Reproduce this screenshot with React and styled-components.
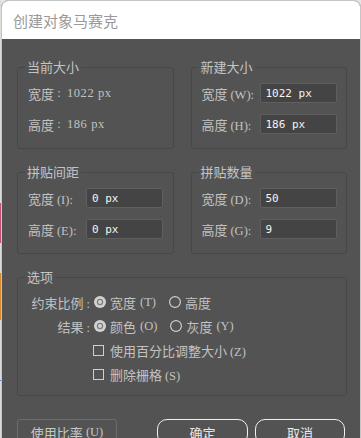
import React from 'react';
import styled, { createGlobalStyle } from 'styled-components';

const GlobalStyle = createGlobalStyle`
  html, body {
    margin: 0;
    padding: 0;
    background: #e6e6e6;
  }
  body {
    font-family: "Noto Sans CJK SC", "Noto Sans", sans-serif;
  }
`;

const Page = styled.div`
  display: flex;
  width: 361px;
  height: 438px;
  overflow: hidden;
`;

// the window behind the dialog peeks out on the left edge
const Strip = styled.div`
  flex: none;
  width: 1px;
  background: linear-gradient(
    to bottom,
    #dcdcdc 0 203px,
    #4a78d0 203px 204px,
    #c24f7c 204px 243px,
    #dcdcdc 243px 273px,
    #d98a2f 273px 320px,
    #dcdcdc 320px 380px,
    #4a78d0 380px 381px,
    #dcdcdc 381px
  );
`;

const Dialog = styled.div`
  flex: 1;
  display: flex;
  flex-direction: column;
  border: 1px solid #c6c6c6;
  border-bottom: none;
  border-radius: 7px 7px 0 0;
  overflow: hidden;
  background: #535353;
`;

const TitleBar = styled.div`
  height: 38px;
  flex: none;
  display: flex;
  align-items: center;
  padding-left: 11px;
  background: #fff;
  color: #9a9a9a;
  font-size: 15px;
`;

const Body = styled.div`
  flex: 1;
  display: flex;
  flex-direction: column;
  gap: 15px;
  padding: 20px 13px 0 15px;
`;

const Pair = styled.div`
  display: grid;
  grid-template-columns: 1fr 1fr;
  column-gap: 17px;
`;

const Group = styled.fieldset`
  margin: 0;
  min-width: 0;
  border: 1px solid #474747;
  border-radius: 3px;
  padding: ${(p) => p.$pad || '8px 9px 14px 10px'};
  display: flex;
  flex-direction: column;
  gap: ${(p) => p.$gap || '11px'};
`;

const Legend = styled.legend`
  padding: 0 2px;
  margin-left: -3px;
  font-size: 13px;
  line-height: 16px;
  color: #c4c4c4;
`;

const Row = styled.div`
  display: flex;
  align-items: center;
  height: 20px;
  font-size: 13px;
  color: #c2c2c2;
  white-space: nowrap;
`;

const Latin = styled.span`
  font-family: "Liberation Serif", serif;
  font-size: 12.5px;
  letter-spacing: ${(p) => p.$track || 0}px;
`;

const Label = styled.span`
  flex: none;
  width: 58px;
  white-space: nowrap;
`;

const Field = styled.div`
  flex: none;
  box-sizing: border-box;
  width: 77px;
  height: 20px;
  padding: 0 5px;
  display: flex;
  align-items: center;
  background: #444;
  border: 1px solid #5f5f5f;
  border-radius: 2px;
  color: #f4f4f4;
  font-family: "DejaVu Sans Mono", monospace;
  font-size: 11px;
`;

const OptLabel = styled.span`
  flex: none;
  width: 62px;
  margin-right: 4px;
  text-align: right;
`;

const Choice = styled.span`
  display: inline-flex;
  align-items: center;
  gap: 4px;
  margin-right: 13px;
`;

const CheckRow = styled(Row)`
  padding-left: 65px;
  gap: 6px;
`;

const Box = styled.span`
  flex: none;
  box-sizing: border-box;
  width: 11px;
  height: 11px;
  border: 1px solid #cfcfcf;
`;

const Footer = styled.div`
  display: flex;
  align-items: flex-start;
  margin-top: 8px;
`;

const Button = styled.div`
  box-sizing: border-box;
  height: 26px;
  width: ${(p) => p.$w}px;
  margin-left: ${(p) => p.$ml || 0}px;
  display: flex;
  align-items: center;
  justify-content: center;
  font-size: 13px;
  color: ${(p) => (p.$round ? '#e8e8e8' : '#c8c8c8')};
  border: ${(p) => (p.$round ? '1.5px solid #f0f0f0' : '1px solid #6c6c6c')};
  border-radius: ${(p) => (p.$round ? '10px' : '3px')};
`;

const Radio = ({ on }) => (
  <svg width="12" height="12" viewBox="0 0 12 12">
    {on ? (
      <>
        <circle cx="6" cy="6" r="6" fill="#d2d2d2" />
        <circle cx="6" cy="6" r="3.2" fill="#7c7c7c" />
        <circle cx="6" cy="6" r="1.9" fill="#d6d6d6" />
      </>
    ) : (
      <circle cx="6" cy="6" r="5.4" fill="none" stroke="#cfcfcf" strokeWidth="1.2" />
    )}
  </svg>
);

const current = { title: '当前大小', rows: [['宽度', '1022 px'], ['高度', '186 px']] };

const inputGroups = {
  create: { title: '新建大小', rows: [['宽度', 'W', '1022 px'], ['高度', 'H', '186 px']] },
  gap: { title: '拼贴间距', rows: [['宽度', 'I', '0 px'], ['高度', 'E', '0 px']] },
  count: { title: '拼贴数量', rows: [['宽度', 'D', '50'], ['高度', 'G', '9']] },
};

const InputGroup = ({ data }) => (
  <Group>
    <Legend>{data.title}</Legend>
    {data.rows.map(([name, key, value]) => (
      <Row key={key}>
        <Label>
          {name} <Latin>({key}):</Latin>
        </Label>
        <Field>{value}</Field>
      </Row>
    ))}
  </Group>
);

export default function App() {
  return (
    <>
      <GlobalStyle />
      <Page>
        <Strip />
        <Dialog>
          <TitleBar>创建对象马赛克</TitleBar>
          <Body>
            <Pair>
              <Group>
                <Legend>{current.title}</Legend>
                {current.rows.map(([name, value]) => (
                  <Row key={name}>
                    {name}
                    <Latin>&nbsp;:&nbsp;&nbsp;</Latin>
                    <Latin $track={0.6}>{value}</Latin>
                  </Row>
                ))}
              </Group>
              <InputGroup data={inputGroups.create} />
            </Pair>
            <Pair>
              <InputGroup data={inputGroups.gap} />
              <InputGroup data={inputGroups.count} />
            </Pair>
            <Group $pad="7px 9px 11px 10px" $gap="4px">
              <Legend>选项</Legend>
              <Row>
                <OptLabel>
                  约束比例<Latin>&nbsp;:</Latin>
                </OptLabel>
                <Choice>
                  <Radio on />
                  宽度 <Latin>(T)</Latin>
                </Choice>
                <Choice>
                  <Radio />
                  高度
                </Choice>
              </Row>
              <Row>
                <OptLabel>
                  结果<Latin>&nbsp;:</Latin>
                </OptLabel>
                <Choice>
                  <Radio on />
                  颜色 <Latin>(O)</Latin>
                </Choice>
                <Choice>
                  <Radio />
                  灰度 <Latin>(Y)</Latin>
                </Choice>
              </Row>
              <CheckRow>
                <Box />
                <span>
                  使用百分比调整大小 <Latin>(Z)</Latin>
                </span>
              </CheckRow>
              <CheckRow>
                <Box />
                <span>
                  删除栅格 <Latin>(S)</Latin>
                </span>
              </CheckRow>
            </Group>
            <Footer>
              <Button $w={100}>
                使用比率 <Latin>&nbsp;(U)</Latin>
              </Button>
              <Button $w={91} $ml={40} $round>
                确定
              </Button>
              <Button $w={90} $ml={7} $round>
                取消
              </Button>
            </Footer>
          </Body>
        </Dialog>
      </Page>
    </>
  );
}
